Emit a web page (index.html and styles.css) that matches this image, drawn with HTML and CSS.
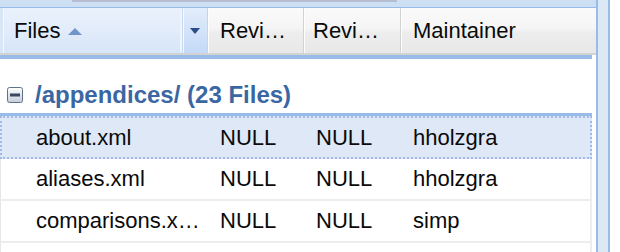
FILE: index.html
```html
<!doctype html>
<html lang="en">
<head>
    <meta charset="UTF-8">
    <title>Files</title>
    <link rel="stylesheet" href="styles.css">
</head>
<body>
<div class="panel">
    <div class="grid">
        <div class="grid_top">
            <div class="grid_thumb"></div>
        </div>

        <div class="grid_hd">
            <div class="hd hd-files">
                <span class="hd_text">Files</span>
                <svg class="sort_icon" width="14" height="7" viewBox="0 0 14 7"><polygon points="0,7 7,0 14,7" fill="#6f95c9"/></svg>
                <div class="hd_menu">
                    <svg width="10" height="6" viewBox="0 0 10 6"><polygon points="0,0 10,0 5,6" fill="#2a4d86"/></svg>
                </div>
            </div>
            <div class="hd hd-sep">Revi…</div>
            <div class="hd hd-sep hd-narrow">Revi…</div>
            <div class="hd hd-sep">Maintainer</div>
        </div>
        <div class="grid_hd_line"></div>

        <div class="grid_body">
            <div class="group_hd">
                <svg class="group_icon" width="16" height="16" viewBox="0 0 16 16">
                    <defs>
                        <linearGradient id="gi" x1="0" y1="0" x2="0" y2="1">
                            <stop offset="0" stop-color="#ffffff"/>
                            <stop offset="1" stop-color="#c3cedb"/>
                        </linearGradient>
                    </defs>
                    <rect x="0.5" y="0.5" width="15" height="15" rx="2" fill="url(#gi)" stroke="#5f718a"/>
                    <rect x="3" y="6.5" width="10" height="3" fill="#38475c"/>
                </svg>
                <span>/appendices/ (23 Files)</span>
            </div>

            <div class="row row-selected">
                <div class="cell cell-first">about.xml</div>
                <div class="cell">NULL</div>
                <div class="cell">NULL</div>
                <div class="cell">hholzgra</div>
            </div>
            <div class="row">
                <div class="cell cell-first">aliases.xml</div>
                <div class="cell">NULL</div>
                <div class="cell">NULL</div>
                <div class="cell">hholzgra</div>
            </div>
            <div class="row">
                <div class="cell cell-first">comparisons.x…</div>
                <div class="cell">NULL</div>
                <div class="cell">NULL</div>
                <div class="cell">simp</div>
            </div>
            <div class="row row-empty"></div>
        </div>
    </div>

    <div class="vscroll"></div>
</div>
</body>
</html>
```

FILE: styles.css
```css
body {
    margin: 0;
    padding: 0;
    background: #fff;
    font-family: "Liberation Sans", Arial, Helvetica, sans-serif;
    color: #0a0a0a;
}

.panel {
    display: flex;
    width: 620px;
    height: 252px;
    overflow: hidden;
}

.grid {
    width: 596px;
    flex-shrink: 0;
}

.grid_top {
    height: 7px;
    background: #cddff3;
}

.grid_thumb {
    margin-left: 72px;
    width: 325px;
    height: 2px;
    background: #b6bdd1;
}

.grid_hd {
    display: grid;
    grid-template-columns: 207px 96px 97px 1fr;
    height: 45px;
    border-top: 1px solid #99bbe8;
    border-bottom: 2px solid #d3d3d3;
    font-size: 22px;
}

.grid_hd_line {
    width: 592px;
    height: 4px;
    background: #99bbe8;
}

.hd {
    display: flex;
    align-items: center;
    padding-left: 13px;
    background: linear-gradient(#fafafa 0, #f5f5f5 45%, #ededed 55%, #e8e8e8 100%);
    white-space: nowrap;
    overflow: hidden;
}

.hd-sep {
    padding-left: 12px;
    border-left: 1px solid #d2d2d2;
    box-shadow: inset 1px 0 #fdfdfd;
}

.hd-narrow {
    padding-left: 9px;
}

.hd-files {
    padding-left: 14px;
    background:
        linear-gradient(to right, #d9e6f6 0, #d9e6f6 3px, #f3f8fe 3px, #f3f8fe 4px, transparent 4px),
        linear-gradient(#e9f1fc 0, #e2ecfa 50%, #d6e5f8 100%);
}

.sort_icon {
    margin-left: 8px;
    margin-top: 2px;
}

.hd_menu {
    margin-left: auto;
    width: 24px;
    height: 100%;
    display: flex;
    align-items: center;
    justify-content: center;
    border-left: 1px solid #c9dbf3;
    box-shadow: inset 1px 0 #f4f8fe, -3px 0 0 -1px #eef4fc;
    background: linear-gradient(#e3edfb 0, #d3e3f9 50%, #c4daf8 100%);
}

.grid_body {
    width: 592px;
    font-size: 22px;
}

.group_hd {
    display: flex;
    align-items: center;
    height: 57px;
    padding-top: 18px;
    padding-left: 7px;
    box-sizing: border-box;
    border-bottom: 3px solid #99bbe8;
    color: #3a67a3;
    font-weight: bold;
    font-size: 24px;
}

.group_icon {
    margin-right: 12px;
}

.row {
    display: grid;
    grid-template-columns: 206px 96px 97px 1fr;
    height: 40px;
    border-left: 1px solid #e6e6e6;
    border-right: 2px solid #ededed;
    border-bottom: 2px solid #ededed;
}

.row-selected {
    grid-template-columns: 205px 96px 97px 1fr;
    height: 39px;
    background: #dfe8f6;
    border: 2px dotted #a3bae9;
}

.row-empty {
    border-bottom: none;
}

.cell {
    display: flex;
    align-items: center;
    padding-left: 13px;
    white-space: nowrap;
    overflow: hidden;
}

.cell-first {
    padding-left: 35px;
}

.row-selected .cell-first {
    padding-left: 34px;
}

.vscroll {
    width: 10px;
    height: 100%;
    background: #dde8f6;
    border-left: 2px solid #99bbe8;
    border-right: 2px solid #99bbe8;
}
```
